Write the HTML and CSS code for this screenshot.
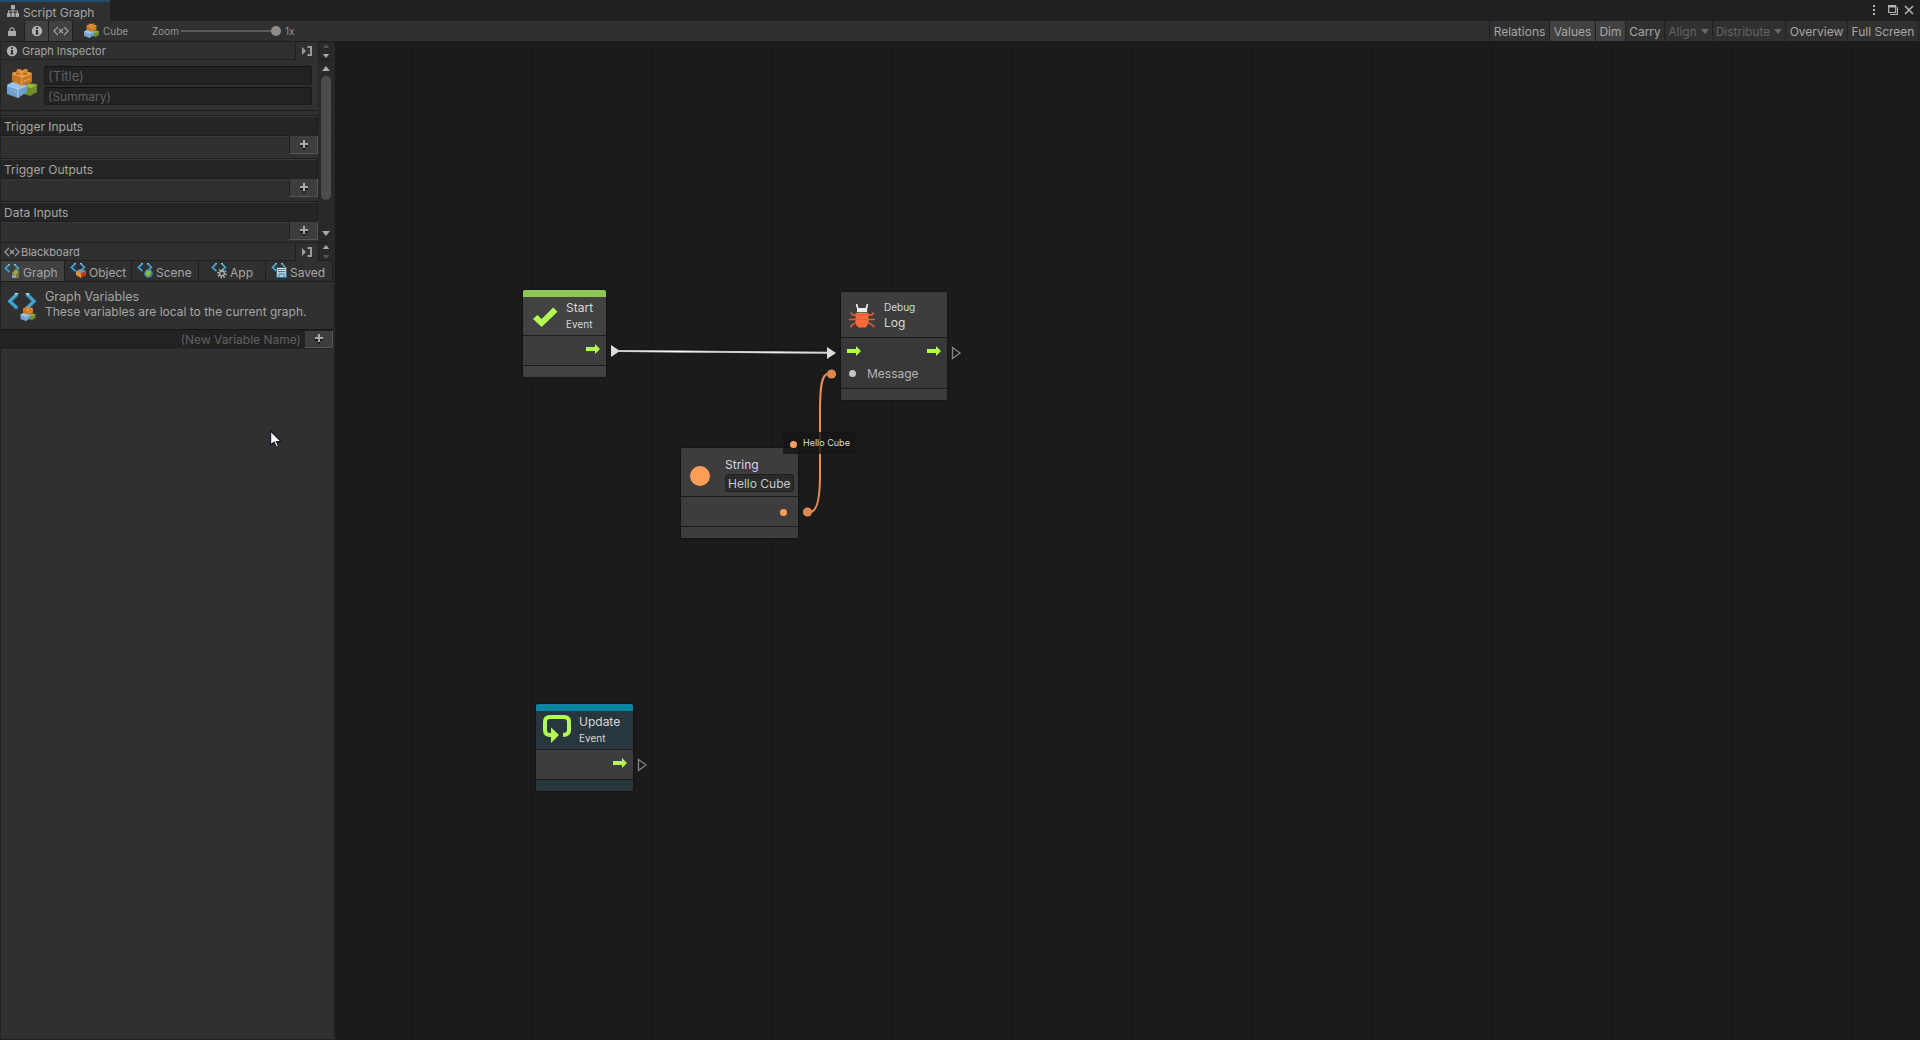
FILE: index.html
```html
<!DOCTYPE html>
<html lang="en">
<head>
<meta charset="utf-8">
<title>Script Graph</title>
<link rel="stylesheet" href="styles.css">
</head>
<body>
<svg class="defs" width="0" height="0">
  <defs>
    <symbol id="info" viewBox="0 0 12 12"><circle cx="6" cy="6" r="5.2" fill="#b0b0b0"/><path d="M5 2.2h2v1.7H5zM4.6 5H7v3.4h.6v1.2H4.4V8.4H5V6.1h-.4z" fill="#303030"/></symbol>
    <symbol id="vars" viewBox="0 0 16 12"><path d="M5 1.8.9 6 5 10.200M11 1.800 15.100 6 11 10.200M6 4l4 4M10 4 6 8" fill="none" stroke="#a2a2a2" stroke-width="1.200"/></symbol>
    <symbol id="dock" viewBox="0 0 11 10"><path d="M0 1v8l4-4z" fill="#999"/><path d="M5.500 1H9v8H5.500" fill="none" stroke="#999" stroke-width="2"/></symbol>
    <symbol id="plus" viewBox="0 0 8 10"><path d="M3 2h2v8H3zM0 5h8v2H0z" fill="#1b1b1b"/><path d="M3 0h2v8H3zM0 3h8v2H0z" fill="#a9a9a9"/></symbol>
    <symbol id="bricks" viewBox="0 0 30 30">
      <path d="M17 18l5-3 8 1v8l-7 4-6-2z" fill="#6f8e2b"/><path d="M17 18l5-2 8 1-6 3z" fill="#9cba45"/>
      <path d="M0 17l5-3 15 3v7l-9 6-11-4z" fill="#6e9fce"/><path d="M0 17l6-3 14 3-9 4z" fill="#99c4e9"/><path d="M11 21v9M1 18l10 3 8-3" stroke="#c0dbf0" stroke-width=".8" fill="none"/>
      <path d="M5 5l9-3 11 3v9l-10 4-10-5z" fill="#c97622"/><path d="M5 5l9-3 11 3-10 4z" fill="#df9843"/><path d="M15 9v9M6 6l9 3 9-3" stroke="#efb563" stroke-width=".8" fill="none"/>
      <ellipse cx="12" cy="2.300" rx="2.500" ry="1.300" fill="#dc8e35"/><ellipse cx="18.500" cy="2.400" rx="2.500" ry="1.300" fill="#dc8e35"/><ellipse cx="11" cy="5.800" rx="2.500" ry="1.300" fill="#bf6c1c"/><ellipse cx="18" cy="5.800" rx="2.500" ry="1.300" fill="#bf6c1c"/><path d="M7 23l2 1M4 22l2 1M17 13l6-2" stroke="#efe0c5" opacity=".5"/>
    </symbol>
    <symbol id="chev" viewBox="0 0 30 17"><path d="M10.500 1 3 8.500l7.500 7" fill="none" stroke="#276d93" stroke-width="4"/><path d="M10 1 2.500 8l7.500 7" fill="none" stroke="#4ba3cf" stroke-width="2.600"/><path d="M19.500 1 27 8.500l-7.500 7" fill="none" stroke="#276d93" stroke-width="4"/><path d="M20 1l7 7-7 7" fill="none" stroke="#4ba3cf" stroke-width="2.600"/><path d="M8 1l3-1M19 0l3 1.500" stroke="#b7d5e2" stroke-width="2"/></symbol>
    <symbol id="flow" viewBox="0 0 14 10"><path d="M0 3h9V0l5 5-5 5V7H0z" fill="#b3fa55"/></symbol>
    <symbol id="up" viewBox="0 0 8 5"><path d="M4 0l4 5H0z"/></symbol>
    <symbol id="down" viewBox="0 0 8 5"><path d="M0 0h8L4 5z"/></symbol>
    <linearGradient id="wire" x1="615" y1="0" x2="830" y2="0" gradientUnits="userSpaceOnUse"><stop offset="0" stop-color="#c4c4c4"/><stop offset=".3" stop-color="#fff"/><stop offset=".5" stop-color="#cbc3c8"/><stop offset=".75" stop-color="#f0f0f0"/><stop offset="1" stop-color="#cfcfcf"/></linearGradient>
  </defs>
</svg>
<div class="window">
  <header class="titlebar">
    <div class="tab">
      <svg class="tree" viewBox="0 0 12 12"><path d="M4 0h4v4H6.600v1.500H11V8h1v4H8.500V8h1.300V6.600H6.600V8h1v4H4.400V8h1V6.600H2.200V8h1.300v4H0V8h1V5.500h4.400V4H4z" fill="#aaa"/></svg>
      <span>Script Graph</span>
    </div>
    <svg class="controls" viewBox="0 0 42 12"><path d="M1 1h2v2H1zM1 5h2v2H1zM1 9h2v2H1z" fill="#b4b4b4"/><path d="M16.700 1.500h7v7h-7z" fill="none" stroke="#b4b4b4" stroke-width="1.200"/><path d="M16 1h8v2.500h-8zM25 3h1v8h-8v-1h7z" fill="#b4b4b4"/><path d="M33 2l8 8M41 2l-8 8" stroke="#b4b4b4" stroke-width="1.600"/></svg>
  </header>
  <div class="toolbar">
    <div class="tool lock"><svg viewBox="0 0 8 9"><path d="M2 4V2.800a2 2 0 0 1 4 0V4" fill="none" stroke="#aaa" stroke-width="1.200"/><path d="M0 4h8v5H0z" fill="#aaa"/></svg></div>
    <div class="tool on"><svg width="12" height="12"><use href="#info"/></svg></div>
    <div class="tool on"><svg width="16" height="12"><use href="#vars"/></svg></div>
    <svg class="cube" width="15" height="15"><use href="#bricks"/></svg>
    <span class="small name">Cube</span>
    <span class="small zoomlabel">Zoom</span>
    <div class="slider"><i></i></div>
    <span class="small">1x</span>
    <div class="actions">
      <span class="a1">Relations</span><span class="a2 on">Values</span><span class="a3 on">Dim</span><span class="a4">Carry</span><span class="a5 off">Align <svg><use href="#down"/></svg></span><span class="a6 off">Distribute <svg><use href="#down"/></svg></span><span class="a7">Overview</span><span class="a8">Full Screen</span>
    </div>
  </div>
  <div class="main">
    <aside class="side">
      <div class="head">
        <div class="cap"><svg width="12" height="12"><use href="#info"/></svg><span>Graph Inspector</span></div>
        <svg class="dock"><use href="#dock"/></svg>
        <div class="steps"><svg class="dim"><use href="#up"/></svg><svg><use href="#down"/></svg></div>
      </div>
      <div class="inspector">
        <div class="content">
          <div class="meta">
            <svg class="big"><use href="#bricks"/></svg>
            <div class="fields"><div class="field title">(Title)</div><div class="field">(Summary)</div></div>
          </div>
          <section><h3>Trigger Inputs</h3><div class="plus"><svg><use href="#plus"/></svg></div></section>
          <section><h3>Trigger Outputs</h3><div class="plus"><svg><use href="#plus"/></svg></div></section>
          <section><h3>Data Inputs</h3><div class="plus"><svg><use href="#plus"/></svg></div></section>
        </div>
        <div class="scroll"><svg><use href="#up"/></svg><i></i><svg><use href="#down"/></svg></div>
      </div>
      <div class="head second">
        <div class="cap"><svg width="16" height="12"><use href="#vars"/></svg><span>Blackboard</span></div>
        <svg class="dock"><use href="#dock"/></svg>
        <div class="steps"><svg><use href="#up"/></svg><svg class="dim"><use href="#down"/></svg></div>
      </div>
      <div class="tabs">
        <div class="t1 on"><svg viewBox="0 0 16 16"><use href="#chev" width="16" height="9" y="1"/><path d="M8 10l4-5 3 3v7H8z" fill="#77803e"/><path d="M9 10l3-3 2 2-3 3z" fill="#b5a64d"/><path d="M8 12h4v3H8z" fill="#8ca5bb"/></svg><span>Graph</span></div>
        <div class="t2"><svg viewBox="0 0 16 16"><use href="#chev" width="16" height="9"/><path d="M6 8l5-2 5 2v4l-5 3-5-3z" fill="#be3e20"/><path d="M6 8l5-2 5 2-5 2z" fill="#6799b7"/><path d="M6 8l5 2v5l-5-3z" fill="#e39532"/></svg><span>Object</span></div>
        <div class="t3"><svg viewBox="0 0 16 16"><use href="#chev" width="16" height="9"/><circle cx="11.500" cy="10.500" r="4.400" fill="#2e7dad"/><path d="M10 7l4 1v3l-3 3-3-3z" fill="#8fbb31"/></svg><span>Scene</span></div>
        <div class="t4"><svg viewBox="0 0 16 16"><use href="#chev" width="16" height="9"/><circle cx="11" cy="10.500" r="3.900" fill="none" stroke="#b5b8ba" stroke-width="1.800" stroke-dasharray="1.500 1.500"/><circle cx="11" cy="10.500" r="2.300" fill="#383838" stroke="#b5b8ba" stroke-width="1.200"/></svg><span>App</span></div>
        <div class="t5"><svg viewBox="0 0 16 16"><use href="#chev" width="16" height="9"/><path d="M5.500 4.500h10v10h-10z" fill="#b6cbd7" stroke="#1e6e9e"/><path d="M7 5h7v4H7z" fill="#e1e4e5"/><path d="M7 6.500h7M7 8.500h7M8 14v-3h5v3" stroke="#3684ae" fill="none"/></svg><span>Saved</span></div>
      </div>
      <div class="about">
        <svg viewBox="0 0 30 30"><use href="#chev" width="30" height="17" y="1"/><use href="#bricks" x="13" y="14" width="16" height="15"/></svg>
        <div><div class="h">Graph Variables</div><div class="p">These variables are local to the current graph.</div></div>
      </div>
      <div class="newvar"><div>(New Variable Name)</div><div class="plus"><svg><use href="#plus"/></svg></div></div>
    </aside>
    <main class="canvas">
      <div class="node start">
        <div class="bar"></div>
        <div class="nhead"><svg viewBox="0 0 26 20"><path d="M0 12l4.500-4 4.500 4L21 0l4.500 4.500L9 20.500z" fill="#b3fa55"/></svg><div><div class="big">Start</div><div class="sub">Event</div></div></div>
        <div class="ports"><svg class="flow"><use href="#flow"/></svg></div>
        <div class="foot"></div>
      </div>
      <div class="node debug">
        <div class="nhead"><svg viewBox="0 0 26 24"><path d="M6.700 0h1.600l1.200 4h7l1.200-4h1.600l-1.200 5v3.300H8V5z" fill="#eee"/><path d="M6.500 9h13v9q0 3-3 5.500h-7q-3-2.500-3-5.500z" fill="#ff6b3c"/><path d="M2 8.500l1.500 2.500H23l1.500-2.500M0 15.500h26M2 23.500V22l5-3.500M24.500 23.500V22l-5-3.500" fill="none" stroke="#e56239" stroke-width="1.500"/></svg><div><div class="sub">Debug</div><div class="big">Log</div></div></div>
        <div class="ports"><div class="row"><svg class="flow"><use href="#flow"/></svg><svg class="flow"><use href="#flow"/></svg></div><div class="row msg"><i></i><span>Message</span></div></div>
        <div class="foot"></div>
      </div>
      <div class="node string">
        <div class="nhead"><i class="ball"></i><div><div class="big">String</div><div class="input">Hello Cube</div></div></div>
        <div class="ports"><i class="dot"></i></div>
        <div class="foot"></div>
      </div>
      <div class="node update">
        <div class="bar"></div>
        <div class="nhead"><svg viewBox="0 0 28 28"><path d="M9 20H7q-5 0-5-5V7q0-5 5-5h14q5 0 5 5v8q0 4.700-6 5" fill="none" stroke="#b3fa55" stroke-width="4"/><path d="M8 12.500l8 7.500-8 8z" fill="#b3fa55"/></svg><div><div class="big">Update</div><div class="sub">Event</div></div></div>
        <div class="ports"><svg class="flow"><use href="#flow"/></svg></div>
        <div class="foot"></div>
      </div>
      <svg class="wires" viewBox="335 42 1585 998">
        <path d="M611 345l9 6-9 6z" fill="#dcdcdc"/><path d="M619 351L829 352.700" stroke="url(#wire)" stroke-width="2"/><path d="M827 347l9 6-9 6z" fill="#dcdcdc"/>
        <path d="M952.500 347.500l7.500 5.500-7.500 5.500zM638.500 759.500l7.500 5.500-7.500 5.500z" fill="none" stroke="#858585" stroke-width="1.300"/>
        <path d="M807 512h3c7 0 10-12 10-37v-64c0-26 2-37 8-37h3" fill="none" stroke="#e98f52" stroke-width="2"/>
        <circle cx="807.500" cy="512" r="4.600" fill="#dc8750"/><circle cx="831.500" cy="374" r="4.600" fill="#dc8750"/>
      </svg>
      <div class="value"><i></i><span>Hello Cube</span></div>
    </main>
  </div>
  <svg class="cursor" viewBox="0 0 13 20"><path d="M.7 1v15l3.700-3.200 2.500 5.700 2.400-1-2.400-5.400h5z" fill="#fff" stroke="#111225" stroke-width="1.200"/></svg>
</div>
</body>
</html>
```
FILE: styles.css
```css
* { box-sizing: border-box; }
body { margin: 0; background: #191919; font: 12px/16px Inter, "Noto Sans", sans-serif; color: #a6a6a6; }
svg { display: block; flex: none; overflow: visible; }
.defs { position: absolute; }
.window { width: 1920px; height: 1040px; display: flex; flex-direction: column; overflow: hidden; position: relative; }
.titlebar { height: 21px; background: #202020; display: flex; justify-content: space-between; }
.tab { width: 110px; height: 21px; background: #303030; border-top: 2px solid #234c6e; display: flex; align-items: center; gap: 4px; padding-left: 7px; white-space: nowrap; padding-top: 2px; }
.tree { width: 12px; height: 12px; margin-top: -3px; }
.controls { width: 42px; height: 12px; margin: 4px 6px 0 0; }
.toolbar { height: 21px; background: #303030; border-bottom: 1px solid #1c1c1c; display: flex; align-items: center; }
.tool { width: 24px; height: 20px; border-right: 1px solid #202020; display: flex; align-items: center; justify-content: center; }
.tool.on { background: #414141; }
.lock { width: 25px; }
.lock svg { width: 8px; height: 9px; }
.cube { margin: -2px 4px 0 11px; }
.small { font-size: 10px; color: #969696; }
.name { width: 49px; }
.zoomlabel { width: 29px; }
.slider { width: 100px; height: 2px; background: #5a5a5a; margin-right: 4px; display: flex; justify-content: flex-end; align-items: center; }
.slider i { width: 10px; height: 10px; border-radius: 50%; background: #8d8d8d; }
.actions { margin-left: auto; display: flex; height: 20px; border-left: 1px solid #202020; padding-right: 1px; }
.actions span { border-right: 1px solid #202020; display: flex; align-items: center; justify-content: center; gap: 4px; white-space: nowrap; padding-top: 1px; }
.actions .on { background: #414141; }
.actions .off { color: #636363; }
.actions svg { width: 8px; height: 5px; fill: #686868; }
.a1 { width: 60px; } .a2 { width: 46px; } .a3 { width: 30px; } .a4 { width: 39px; } .a5 { width: 48px; } .a6 { width: 73px; } .a7 { width: 62px; } .a8 { width: 71px; }
.main { flex: 1; display: flex; }
.side { width: 335px; background: #303030; border-left: 1px solid #222; border-right: 2px solid #282828; display: flex; flex-direction: column; border-bottom: 1px solid #202020; }
.head { height: 18px; display: flex; align-items: center; }
.cap { width: 295px; height: 18px; display: flex; align-items: center; border-right: 1px solid #202020; border-bottom: 1px solid #202020; padding-left: 5px; gap: 4px; font-size: 11px; }
.dock { width: 11px; height: 10px; margin: 0 5px 0 6px; }
.steps { width: 15px; height: 18px; background: #292929; border-left: 1px solid #1e1e1e; border-bottom: 1px solid #1e1e1e; display: flex; flex-direction: column; align-items: center; justify-content: space-between; padding: 2px 0 1px; }
.steps svg { width: 8px; height: 4px; fill: #aaa; }
.steps .dim { fill: #525252; }
.inspector { height: 182px; display: flex; overflow: hidden; }
.content { width: 318px; }
.meta { height: 55px; display: flex; padding: 6px 0 0 6px; border-bottom: 1px solid #1c1c1c; margin-bottom: 0; height: 51px; }
.meta .big { width: 30px; height: 30px; margin: 2px 7px 0 0; }
.fields { width: 268px; display: flex; flex-direction: column; gap: 2px; }
.field { height: 18px; background: #222; border: 1px solid #1b1b1b; border-top-color: #111; border-radius: 3px; color: #606060; padding-left: 3px; line-height: 18px; }
.field.title { height: 19px; font-size: 13px; line-height: 19px; }
.meta + section { margin-top: 4px; }
section { height: 43px; }
h3 { margin: 0; height: 21px; background: #252525; border: solid #1c1c1c; border-width: 1px 1px 1px 0; box-shadow: inset 0 1px #383838, 0 1px #3a3a3a; font: inherit; line-height: 21px; padding-left: 3px; }
.plus { width: 29px; height: 18px; border: 1px solid #222; border-right-color: #555; border-bottom-color: #555; background: #3d3d3d; display: flex; align-items: center; justify-content: center; margin-left: auto; position: relative; }
section .plus { margin-top: -1px; height: 19px; }
.plus svg { width: 8px; height: 10px; }
.scroll { width: 15px; height: 182px; background: #292929; display: flex; flex-direction: column; align-items: center; padding: 6px 0 5px; }
.scroll svg { width: 8px; height: 5px; fill: #aaa; }
.scroll i { width: 10px; height: 124px; margin: 5px 0 31px; background: #4c4c4c; border-radius: 5px; }
.second { height: 19px; border-top: 1px solid #202020; }
.second .cap { padding-left: 3px; gap: 1px; }
.tabs { height: 21px; display: flex; border-bottom: 1px solid #1d1d1d; }
.tabs div { height: 20px; border-right: 1px solid #202020; display: flex; align-items: center; gap: 3px; padding-left: 3px; font-size: 12px; }
.tabs svg { width: 16px; height: 16px; margin-top: -1px; }
.tabs span { padding-top: 3px; }
.tabs .on { background: #414141; }
.t1 { width: 64px; } .t2 { width: 67px; } .t3 { width: 67px; } .t4 { width: 67px; } .t5 { width: 67px; }
.tabs .t2, .tabs .t3, .tabs .t5 { padding-left: 5px; }
.tabs .t4 { padding-left: 12px; }
.about { height: 47px; display: flex; padding: 10px 0 0 6px; gap: 8px; }
.about svg { width: 30px; height: 30px; }
.h { font-size: 12.5px; line-height: 15px; margin-top: -3px; }
.p { line-height: 15px; white-space: nowrap; }
.newvar { height: 20px; display: flex; background: #222; border-top: 1px solid #151515; border-bottom: 1px solid #252525; color: #606060; }
.newvar > div:first-child { width: 303px; text-align: right; padding-right: 3px; line-height: 19px; }
.canvas { flex: 1; position: relative; overflow: hidden; background-color: #1b1b1b;
  background-image: linear-gradient(90deg, #161616 1px, transparent 1px), linear-gradient(#161616 1px, transparent 1px), linear-gradient(90deg, #191919 1px, transparent 1px), linear-gradient(#191919 1px, transparent 1px);
  background-size: 120px 120px, 120px 120px, 24px 24px, 24px 24px; background-position: 76px 67px, 76px 67px, 4px 19px, 4px 19px; }
.node { position: absolute; background: #3d3d3d; color: #d8d8d8; border-radius: 2px; display: flex; flex-direction: column; overflow: hidden; box-shadow: 0 0 2px #0b0b0b; }
.bar { height: 7px; background: #8bc751; }
.nhead { display: flex; border-bottom: 1px solid #1c1c1c; background: #424242; }
.ports { border-bottom: 1px solid #1c1c1c; }
.foot { flex: 1; background: #424242; }
.big { font-size: 12px; line-height: 16px; }
.sub { font-size: 10px; line-height: 16px; }
.flow { width: 14px; height: 10px; }
.start { left: 188px; top: 248px; width: 83px; height: 87px; }
.start .nhead { height: 39px; padding: 3px 0 0 10px; gap: 8px; }
.start .nhead svg { width: 25px; height: 20px; margin-top: 7px; }
.start .ports, .update .ports { height: 30px; display: flex; justify-content: flex-end; padding: 8px 6px 0 0; }
.debug { left: 506px; top: 250px; width: 106px; height: 108px; }
.debug .nhead { height: 46px; padding: 7px 0 0 8px; gap: 9px; background: #3d3d3d; }
.debug .nhead svg { width: 26px; height: 24px; margin-top: 5px; }
.debug .ports { height: 51px; padding: 8px 6px 0; background: #383838; }
.debug .row { display: flex; justify-content: space-between; }
.debug .foot, .string .foot { background: #3d3d3d; }
.debug .msg { justify-content: flex-start; margin-top: 10px; align-items: center; gap: 11px; padding-left: 2px; color: #b5b5b5; }
.msg i { width: 7px; height: 7px; border-radius: 50%; background: #c5c5c5; margin-top: -1px; }
.string { left: 346px; top: 406px; width: 117px; height: 90px; }
.string .nhead { height: 49px; padding: 9px 0 0 9px; gap: 15px; background: #3d3d3d; }
.ball { width: 20px; height: 20px; border-radius: 50%; background: #ff9e58; margin-top: 9px; }
.input { width: 69px; height: 18px; border: 1px solid #202020; border-radius: 3px; background: #2b2b2b; padding-left: 2px; line-height: 18px; white-space: nowrap; margin-top: 1px; color: #c8c8c8; }
.string .ports { height: 30px; display: flex; justify-content: flex-end; padding: 12px 11px 0; }
.dot { width: 7px; height: 7px; border-radius: 50%; background: #ff9e58; }
.update { left: 201px; top: 662px; width: 97px; height: 87px; }
.update .bar { background: #0784a0; }
.update .nhead { height: 39px; background: #28373d; padding: 3px 0 0 7px; gap: 8px; }
.update .nhead svg { width: 28px; height: 28px; margin-top: 1px; }
.update .foot { background: #28373d; }
.wires { position: absolute; left: 0; top: 0; width: 1585px; height: 998px; fill: none; }
.value { position: absolute; left: 448px; top: 390px; width: 73px; height: 22px; background: rgba(22, 22, 22, .82); display: flex; align-items: center; gap: 6px; padding-left: 7px; color: #ddd; font-size: 9px; white-space: nowrap; }
.value i { width: 7px; height: 7px; border-radius: 50%; background: #ff9e58; margin-top: 2px; }
.cursor { position: absolute; left: 270px; top: 430px; width: 12px; height: 19px; }
```
